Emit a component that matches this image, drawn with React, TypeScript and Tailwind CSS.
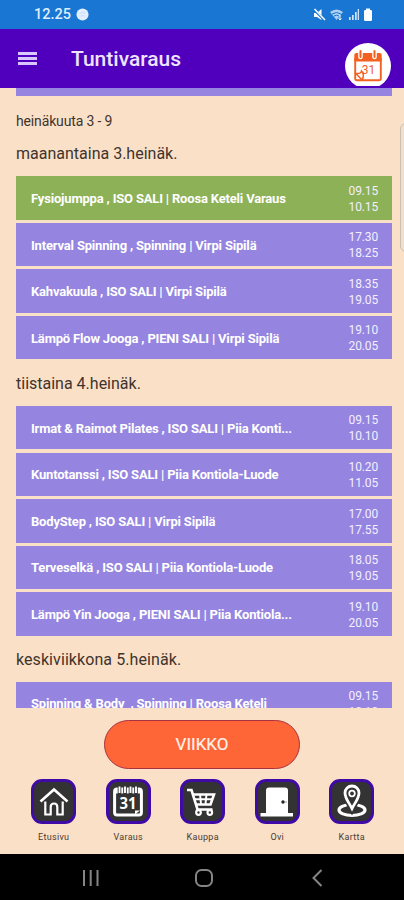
import React from 'react';

interface Lesson {
  name: string;
  start: string;
  end: string;
  booked?: boolean;
}

const monday: Lesson[] = [
  { name: 'Fysiojumppa , ISO SALI | Roosa Keteli Varaus', start: '09.15', end: '10.15', booked: true },
  { name: 'Interval Spinning , Spinning | Virpi Sipilä', start: '17.30', end: '18.25' },
  { name: 'Kahvakuula , ISO SALI | Virpi Sipilä', start: '18.35', end: '19.05' },
  { name: 'Lämpö Flow Jooga , PIENI SALI | Virpi Sipilä', start: '19.10', end: '20.05' },
];

const tuesday: Lesson[] = [
  { name: 'Irmat & Raimot Pilates , ISO SALI | Piia Konti...', start: '09.15', end: '10.10' },
  { name: 'Kuntotanssi , ISO SALI | Piia Kontiola-Luode', start: '10.20', end: '11.05' },
  { name: 'BodyStep , ISO SALI | Virpi Sipilä', start: '17.00', end: '17.55' },
  { name: 'Terveselkä , ISO SALI | Piia Kontiola-Luode', start: '18.05', end: '19.05' },
  { name: 'Lämpö Yin Jooga , PIENI SALI | Piia Kontiola...', start: '19.10', end: '20.05' },
];

const wednesday: Lesson[] = [
  { name: 'Spinning & Body  , Spinning | Roosa Keteli', start: '09.15', end: '10.10' },
];

function HomeIcon() {
  return (
    <svg viewBox="0 0 36 36" className="w-9 h-9 shrink-0" fill="none" stroke="white" strokeWidth="2">
      <path d="M4.500 17.500 18 5.500 31.500 17.500" strokeWidth="2.600" />
      <path d="M9.300 17.500v13h5.400V23q0-3.500 3.300-3.500t3.300 3.500v7.500h5.400v-13" strokeWidth="2.200" />
    </svg>
  );
}

function CalendarIcon() {
  return (
    <svg viewBox="0 0 36 36" className="w-9 h-9 shrink-0" fill="none" stroke="white">
      <path d="M5 4.500h26v5H5z" fill="white" stroke="none" />
      <rect x="4.600" y="5" width="26.800" height="26" rx="2.500" strokeWidth="3" />
      <path d="M9.500 3v7M15 3v7M20.500 3v7M26 3v7" stroke="#333" strokeWidth="3.600" />
      <path d="M9.500 2.500v6.500M15 2.500v6.500M20.500 2.500v6.500M26 2.500v6.500" strokeWidth="1.900" />
      <path d="M25 30.500v-4h5z" fill="white" stroke="none" />
      <text x="18" y="25" textAnchor="middle" fill="white" stroke="none" fontSize="15.500" fontWeight="700" textLength="17" lengthAdjust="spacingAndGlyphs" fontFamily="Noto Sans, sans-serif">31</text>
    </svg>
  );
}

function CartIcon() {
  return (
    <svg viewBox="0 0 36 36" className="w-9 h-9 shrink-0" fill="none" stroke="white" strokeWidth="2.600">
      <path d="M2 6h4.500l6 19.500h15" />
      <path d="M8 10.500h21l-3.500 10H11" />
      <path d="M9.500 15.300h18M15 10l1 10M21.500 10l-1 10" strokeWidth="2" />
      <circle cx="13.500" cy="28.500" r="2.300" fill="#333" strokeWidth="2.200" />
      <circle cx="24.800" cy="28.500" r="2.300" fill="#333" strokeWidth="2.200" />
    </svg>
  );
}

function DoorIcon() {
  return (
    <svg viewBox="0 0 36 36" className="w-9 h-9 shrink-0">
      <path d="M7 29V6.500q0-3 3-3h16q3 0 3 3V29h5v3.500H1.500V29z" fill="white" />
      <circle cx="24" cy="18" r="1.700" fill="#222" />
      <path d="M26 18h2" stroke="#999" />
    </svg>
  );
}

function MapIcon() {
  return (
    <svg viewBox="0 0 36 36" className="w-9 h-9 shrink-0" fill="none" stroke="white">
      <ellipse cx="18" cy="26" rx="13" ry="5.500" strokeWidth="3.200" />
      <path d="M18 26C15 20 11 15 11 9.500a7 7 0 0 1 14 0c0 5.500-4 10.500-7 16.500z" fill="#333" stroke="#333" strokeWidth="5" />
      <path d="M18 24.500C15 18.500 11 14.500 11 9a7 7 0 0 1 14 0c0 5.500-4 9.500-7 15.500z" fill="#333" strokeWidth="2.800" />
      <circle cx="18" cy="9.500" r="2.800" strokeWidth="1.800" />
    </svg>
  );
}

const tabs = [
  { label: 'Etusivu', icon: HomeIcon },
  { label: 'Varaus', icon: CalendarIcon },
  { label: 'Kauppa', icon: CartIcon },
  { label: 'Ovi', icon: DoorIcon },
  { label: 'Kartta', icon: MapIcon },
];

function StatusBar() {
  return (
    <div className="h-[29px] shrink-0 bg-[#1976d2] flex items-center pl-[34px] pr-[30px] text-[#dceeff]">
      <span className="pt-[2px] text-[14.500px] font-medium leading-none">12.25</span>
      <svg viewBox="0 0 14 14" className="w-[13px] h-[13px] ml-[5px]">
        <circle cx="7" cy="7" r="6.500" fill="#e2eeff" />
        <path d="M4 6q3-3 6 0M5 9q2-2 4 0" fill="none" stroke="#c6d8f6" />
      </svg>
      <svg viewBox="0 0 62 16" className="w-[62px] h-4 ml-auto" fill="white">
        <path d="M2 6h3l4.500-4v11L5 10H2z" />
        <path d="M1.500 2 13 13.500" stroke="#1976d2" strokeWidth="2.500" />
        <path d="M2.500 2 13 13" stroke="white" strokeWidth="1.500" />
        <path d="M18 5q6.500-5 13 0l-6.500 8z" opacity=".65" />
        <path d="M20 7q4.500-3 9 0M22 9q2.500-1.500 5 0" fill="none" stroke="#1976d2" />
        <path d="M28 8v5M26.500 11.500l1.500 1.500 1.500-1.500" fill="none" stroke="white" />
        <path d="M37 10h1.700v3H37zM40 8h1.700v5H40zM43 5h1.700v8H43z" opacity=".8" />
        <path d="M45.700 2h1.300v11h-1.300z" opacity=".8" />
        <rect x="52" y="3" width="8" height="11" rx="1.200" />
        <path d="M54 1.500h4V4h-4z" />
      </svg>
    </div>
  );
}

function Header() {
  return (
    <div className="h-[59px] shrink-0 bg-[#5000bc] flex items-center pl-[18px] pr-[13px] text-white">
      <div className="w-[19px] space-y-[2px]">
        <div className="h-[3px] bg-[#d9c8ff]" />
        <div className="h-[3px] bg-[#d9c8ff]" />
        <div className="h-[3px] bg-[#d9c8ff]" />
      </div>
      <h1 className="ml-[34px] pt-[2px] text-[21px] font-medium leading-none text-[#eee4ff]">Tuntivaraus</h1>
      <div className="ml-auto mt-[14px] w-[46px] h-[43px] self-start overflow-hidden">
        <div className="w-[46px] h-[46px] rounded-full bg-white flex items-center justify-center">
          <svg viewBox="0 0 30 34" className="w-[30px] h-[34px]" fill="none" stroke="#f4601f">
            <path d="M1.300 12.500V6q0-2 2-2h23.400q2 0 2 2v6.500z" fill="#f4601f" stroke="none" />
            <path d="M2.200 9v20.500q0 1.800 2 1.800h21.600q2 0 2-1.800V9" strokeWidth="1.900" />
            <path d="M7.500 3v5M21.500 3v5" stroke="white" strokeWidth="4.600" strokeLinecap="round" />
            <path d="M7.500 2v6M21.500 2v6" stroke="#f4601f" strokeWidth="2" strokeLinecap="round" />
            <path d="M3 24.500q5 .5 5.500-2.500 3.500 4 .5 9M3 24.500l6 6.500" strokeWidth="1.500" />
            <text x="15.500" y="24.500" textAnchor="middle" fontSize="12" fill="#f4601f" stroke="none" fontFamily="Roboto, sans-serif">31</text>
          </svg>
        </div>
      </div>
    </div>
  );
}

function LessonList({ lessons }: { lessons: Lesson[] }) {
  return (
    <div className="flex flex-col gap-[3.200px]">
      {lessons.map(lesson => (
        <div key={lesson.name}
          className={`h-[43.400px] pt-[1.500px] shrink-0 flex items-center justify-between pl-[15px] pr-[14px] text-white ${
            lesson.booked ? 'bg-[#8db157]' : 'bg-[#9585e0]'
          }`}>
          <span className="text-[13px] font-bold whitespace-pre tracking-[-0.180px]">{lesson.name}</span>
          <div className="text-[12px] leading-[16px] tracking-[-0.150px] text-right text-[#f3efff]">
            <div>{lesson.start}</div>
            <div>{lesson.end}</div>
          </div>
        </div>
      ))}
    </div>
  );
}

export default function App() {
  return (
    <div className="w-[404px] h-[900px] flex flex-col overflow-hidden bg-[#fbe0c8] font-['Roboto',sans-serif]">
      <StatusBar />
      <Header />

      <div className="relative h-[620px] shrink-0 overflow-hidden pl-4 pr-3 text-[#3f342c]">
        <div className="h-[8px] bg-[#9585e0]" />
        <p className="mt-[16px] h-[18px] text-[14px] leading-[18px] tracking-[-0.150px]">heinäkuuta 3 - 9</p>
        <h2 className="mt-[12px] h-[34.300px] text-[16px] leading-[24px]">maanantaina 3.heinäk.</h2>
        <LessonList lessons={monday} />
        <h2 className="h-[46.600px] pt-[12.500px] text-[16px] leading-[24px]">tiistaina 4.heinäk.</h2>
        <LessonList lessons={tuesday} />
        <h2 className="h-[46px] pt-[12.500px] text-[16px] leading-[24px] tracking-[0.080px]">keskiviikkona 5.heinäk.</h2>
        <LessonList lessons={wednesday} />
        <div className="absolute right-[-8px] top-[35px] w-[12px] h-[129px] rounded-[6px] border border-[#c9bfb2] bg-[#f2dfcb]" />
      </div>

      <button className="mt-[11.500px] pt-[2px] w-[196px] h-[49px] shrink-0 self-center rounded-full border border-[#a83240] bg-[#ff6637] text-[17px] text-[#fff1e8] [-webkit-text-stroke:0.200px]">
        VIIKKO
      </button>

      <nav className="mt-[10.500px] pl-[16.500px] flex">
        {tabs.map(tab => (
          <div key={tab.label} className="w-[74.500px] flex flex-col items-center">
            <div className="w-[45px] h-[45px] rounded-[11px] border-[3px] border-[#3f0aa6] bg-[#333333] flex items-center justify-center">
              <tab.icon />
            </div>
            <span className="mt-[7px] text-[9px] leading-[12px] tracking-[0.300px] text-[#4a3c32]">{tab.label}</span>
          </div>
        ))}
      </nav>

      <div className="mt-auto h-[46.500px] shrink-0 bg-black flex items-center pt-[2px] pl-[82px] pr-[78px] justify-between">
        <svg viewBox="0 0 18 18" className="w-[18px] h-[18px]" stroke="#858585" strokeWidth="2">
          <path d="M2 1v16M8.700 1v16M15.500 1v16" />
        </svg>
        <svg viewBox="0 0 18 18" className="w-[18px] h-[18px]" fill="none" stroke="#858585" strokeWidth="2">
          <rect x="1" y="1" width="16" height="16" rx="5.500" />
        </svg>
        <svg viewBox="0 0 18 18" className="w-[18px] h-[18px]" fill="none" stroke="#858585" strokeWidth="2">
          <path d="M13.500 1 5.500 9l8 8" />
        </svg>
      </div>
    </div>
  );
}
